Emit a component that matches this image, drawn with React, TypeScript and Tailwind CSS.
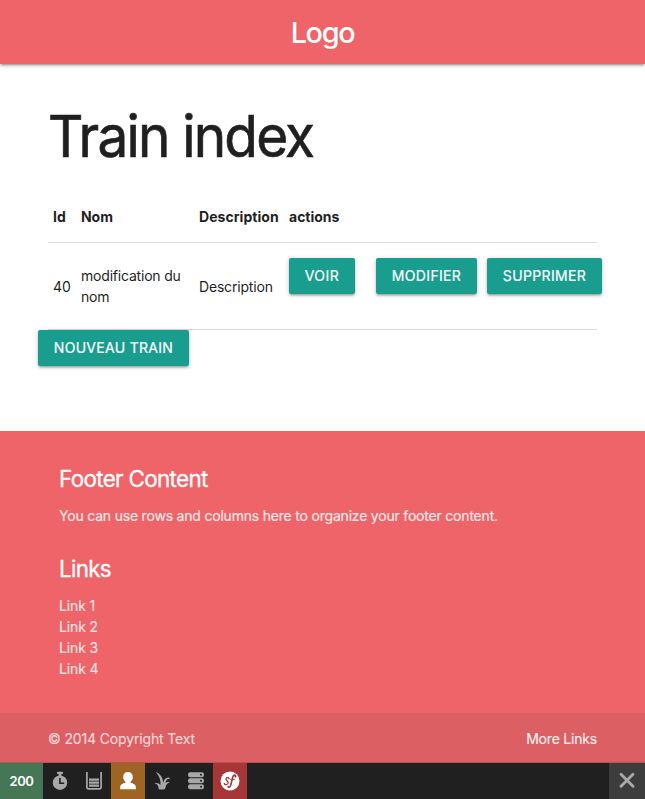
import type { ReactNode } from "react";

const buttonBase =
  "h-9 shrink-0 rounded-[2px] bg-[#199d8f] text-center text-[14px] leading-9 whitespace-nowrap text-white uppercase [-webkit-text-stroke:0.2px] shadow-[0_2px_2px_0_rgba(0,0,0,0.14),0_3px_1px_-2px_rgba(0,0,0,0.12),0_1px_5px_0_rgba(0,0,0,0.2)]";

function Button({ className, children }: { className: string; children: ReactNode }) {
  return (
    <a href="#" className={`${buttonBase} ${className}`}>
      {children}
    </a>
  );
}

function Navbar() {
  return (
    <nav className="relative h-16 bg-[#ee6468] text-center shadow-[0_2px_2px_0_rgba(0,0,0,0.14),0_3px_1px_-2px_rgba(0,0,0,0.12),0_1px_5px_0_rgba(0,0,0,0.2)]">
      <a href="#" className="text-[28.8px] leading-[66px] font-medium tracking-[-1.3px] text-white">
        Logo
      </a>
    </nav>
  );
}

const columns = "grid grid-cols-[28px_118px_90px_1fr] pl-[5px]";

function TrainTable() {
  return (
    <section className="w-[549px]">
      <div className={`${columns} h-[51px] items-center border-b border-[#dadada] pb-[2px] font-bold`}>
        <span>Id</span>
        <span className="tracking-[-0.05px]">Nom</span>
        <span className="tracking-[0.05px]">Description</span>
        <span>actions</span>
      </div>
      <div className={`${columns} h-[87px] items-center border-b border-[#dadada]`}>
        <span>40</span>
        <span className="tracking-[-0.2px]">
          modification du
          <br />
          nom
        </span>
        <span className="tracking-[-0.18px]">Description</span>
        <div className="flex self-start pt-[15px]">
          <Button className="w-[66px] tracking-[0.5px]">Voir</Button>
          <Button className="ml-[21px] w-[101px] tracking-[0.35px]">Modifier</Button>
          <Button className="ml-[10px] w-[115px] tracking-[0.35px]">Supprimer</Button>
        </div>
      </div>
    </section>
  );
}

function Footer() {
  return (
    <footer className="bg-[#ee6468] text-white">
      <div className="h-[282px] px-[59px] pt-[33px]">
        <h5 className="text-[22.4px] leading-[30px] tracking-[-0.65px] [-webkit-text-stroke:0.3px]">
          Footer Content
        </h5>
        <p className="mt-[11px] tracking-[-0.2px] text-[#fbe9ea] [-webkit-text-stroke:0.15px]">
          You can use rows and columns here to organize your footer content.
        </p>
        <h5 className="mt-[28px] text-[22.4px] leading-[30px] tracking-[-0.7px] [-webkit-text-stroke:0.3px]">
          Links
        </h5>
        <ul className="mt-[11px] tracking-[-0.15px] text-[#f5e3e4] [-webkit-text-stroke:0.15px]">
          <li>Link 1</li>
          <li>Link 2</li>
          <li>Link 3</li>
          <li>Link 4</li>
        </ul>
      </div>
      <div className="flex h-[50px] items-center justify-between border-b border-[#b95255] bg-[#dc5f63] px-12 pt-[1px] [-webkit-text-stroke:0.15px]">
        <span className="tracking-[-0.15px] text-[#f8d7d8]">© 2014 Copyright Text</span>
        <a href="#" className="tracking-[-0.2px] text-[#faf0f0]">
          More Links
        </a>
      </div>
    </footer>
  );
}

function DebugToolbar() {
  return (
    <div className="flex h-9 bg-[#202020] text-[#a8a8a8]">
      <div className="flex w-[43px] items-center justify-center bg-[#457655] text-[13px] font-semibold tracking-[-0.4px] text-white">
        200
      </div>
      <div className="flex w-[34px] items-center justify-center">
        <svg width="18" height="20" viewBox="0 0 18 20">
          <path d="M7 .8h4q1.200 0 1.200 1.100T11 3h-.6v2H7.600V3H7q-1.200 0-1.200-1.100T7 .8z" fill="currentColor" />
          <circle cx="9" cy="11.700" r="7.200" fill="currentColor" />
          <path d="M8.900 7v5.200h4.300" fill="none" stroke="#202020" strokeWidth="1.600" />
        </svg>
      </div>
      <div className="flex w-[34px] items-center justify-center">
        <svg width="18" height="20" viewBox="0 0 18 20" fill="none" stroke="currentColor">
          <path d="M1.900 1v15q0 1.900 1.900 1.900h10.400q1.900 0 1.900-1.900V1" strokeWidth="1.700" />
          <path d="M4 7.500h10v2.200H4zm0 3h10v2.200H4zm0 3h10v2.200H4z" fill="currentColor" stroke="none" />
        </svg>
      </div>
      <div className="flex w-[34px] items-center justify-center bg-[#9e6424] text-white">
        <svg width="18" height="20" viewBox="0 0 18 20" fill="currentColor">
          <path d="M9 1c3 0 4.800 2.200 4.800 5 0 1.900-.8 3.700-2.200 4.700v1c2.700.7 5.200 1.800 5.200 4v2.600H1.200v-2.600c0-2.200 2.500-3.300 5.200-4v-1C5 9.700 4.200 7.900 4.200 6c0-2.800 1.800-5 4.800-5z" />
        </svg>
      </div>
      <div className="flex w-[34px] items-center justify-center">
        <svg width="18" height="20" viewBox="0 0 18 20" fill="currentColor">
          <path d="M2.800 1c4.500 1.600 7 5.300 7.400 10.700.7-3.200 2.600-5.400 5.400-5.200.9.100 1.200.8 1.200 1.700-2.600-1-4 .8-4.300 3.800 1-1 2.700-1.300 4.100-.5-2.500.6-3.700 2.400-4.100 5.100q-.2 1.900-1.700 1.900H7q-1.400 0-1.500-1.500c-.1-2.600-1.200-4.100-4-4.600 2.600-.8 4.700-.1 5.900 1.800C8 10 6.600 5 2.800 1z" />
        </svg>
      </div>
      <div className="flex w-[34px] items-center justify-center">
        <svg width="18" height="20" viewBox="0 0 18 20">
          <g fill="currentColor">
            <rect x="1" y="1.300" width="16" height="4.900" rx="2.200" />
            <rect x="1" y="7.300" width="16" height="4.900" rx="2.200" />
            <rect x="1" y="13.300" width="16" height="4.900" rx="2.200" />
          </g>
          <g fill="#202020">
            <circle cx="14" cy="3.700" r="1" />
            <circle cx="14" cy="9.700" r="1" />
            <circle cx="14" cy="15.700" r="1" />
          </g>
        </svg>
      </div>
      <div className="flex w-[34px] items-center justify-center bg-[#a73636]">
        <svg width="20" height="20" viewBox="0 0 20 20">
          <circle cx="10" cy="10" r="9.500" fill="#fff" />
          <g fill="none" stroke="#a73636" strokeLinecap="round">
            <path d="M9 7.800c.3-1.700-3-1.600-3.100.2-.1 1.600 2.500 2 2.200 4-.3 2-3.700 2.200-3.800.4" strokeWidth="1.300" />
            <path d="M15.700 5.300c0-1.800-2.300-1.500-2.900.7l-2.100 8.200c-.6 2.100-1.900 2.500-2.600 1.500" strokeWidth="1.600" />
            <path d="M10.800 8.400h3.400" strokeWidth="1" />
          </g>
          <circle cx="15.400" cy="5.600" r=".9" fill="#a73636" />
        </svg>
      </div>
      <div className="ml-auto flex w-9 items-center justify-center bg-[#3d3d3d]">
        <svg width="18" height="18" viewBox="0 0 18 18">
          <path d="M3 2.300l12 12M15 2.300l-12 12" stroke="#a8a8a8" strokeWidth="2.900" strokeLinecap="round" />
        </svg>
      </div>
    </div>
  );
}

export default function App() {
  return (
    <div className="h-[799px] w-[645px] overflow-hidden bg-white font-['Inter',sans-serif] text-[14px] leading-[21px] text-[#1f1f1f]">
      <Navbar />
      <main className="h-[367px] px-12 pt-[40px]">
        <h1 className="mb-[23px] origin-left scale-x-[0.95] text-[57.8px] leading-[65px] tracking-[-1.9px] [-webkit-text-stroke:0.7px]">
          Train index
        </h1>
        <TrainTable />
        <div className="-ml-[10px] flex">
          <Button className="w-[151px] tracking-[0.3px]">Nouveau train</Button>
        </div>
      </main>
      <Footer />
      <DebugToolbar />
    </div>
  );
}
